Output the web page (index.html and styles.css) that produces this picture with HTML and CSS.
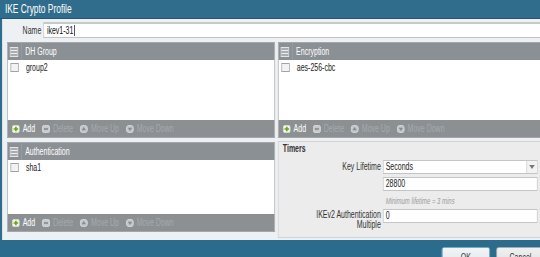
FILE: index.html
```html
<!DOCTYPE html>
<html>
<head>
<meta charset="utf-8">
<title>IKE Crypto Profile</title>
<link rel="stylesheet" href="styles.css">
</head>
<body>
<div class="dialog">
  <div class="titlebar">IKE Crypto Profile</div>
  <div class="content">
    <div class="name-row">
      <span class="name-label">Name</span>
      <div class="name-input">ikev1-31<span class="caret"></span></div>
    </div>
    <div class="grid">
      <div class="col">
        <section class="panel">
          <div class="phead"><span class="hcell"><span class="hcheck"></span></span><span class="htext">DH Group</span></div>
          <div class="pbody"><div class="row"><span class="cb"></span><span>group2</span></div></div>
          <div class="toolbar">
            <span class="tb-item add"><svg class="ico" viewBox="0 0 8 8" preserveAspectRatio="none"><rect x=".5" y=".5" width="7" height="7" rx="1.6" fill="#f3f7e6" stroke="#d7dcc9"/><path d="M4 1.7v4.6M1.7 4h4.6" stroke="#6ba51f" stroke-width="1.7"/></svg>Add</span>
            <span class="tb-item dis"><svg class="ico" viewBox="0 0 8 8" preserveAspectRatio="none"><rect x=".5" y=".5" width="7" height="7" rx="1.6" fill="#c7cacc" stroke="#d3d6d8"/><path d="M2 4h4" stroke="#7f8386" stroke-width="1.5"/></svg>Delete</span>
            <span class="tb-item dis"><svg class="ico" viewBox="0 0 8 8" preserveAspectRatio="none"><rect x=".5" y=".5" width="7" height="7" rx="2.5" fill="#c3c6c9" stroke="#d3d6d8"/><path d="M4 2L6.2 5.2H1.8z" fill="#888c8f"/></svg>Move Up</span>
            <span class="tb-item dis"><svg class="ico" viewBox="0 0 8 8" preserveAspectRatio="none"><rect x=".5" y=".5" width="7" height="7" rx="2.5" fill="#c3c6c9" stroke="#d3d6d8"/><path d="M4 6L6.2 2.8H1.8z" fill="#888c8f"/></svg>Move Down</span>
          </div>
        </section>
        <section class="panel auth">
          <div class="phead"><span class="hcell"><span class="hcheck"></span></span><span class="htext">Authentication</span></div>
          <div class="pbody"><div class="row"><span class="cb"></span><span>sha1</span></div></div>
          <div class="toolbar">
            <span class="tb-item add"><svg class="ico" viewBox="0 0 8 8" preserveAspectRatio="none"><rect x=".5" y=".5" width="7" height="7" rx="1.6" fill="#f3f7e6" stroke="#d7dcc9"/><path d="M4 1.7v4.6M1.7 4h4.6" stroke="#6ba51f" stroke-width="1.7"/></svg>Add</span>
            <span class="tb-item dis"><svg class="ico" viewBox="0 0 8 8" preserveAspectRatio="none"><rect x=".5" y=".5" width="7" height="7" rx="1.6" fill="#c7cacc" stroke="#d3d6d8"/><path d="M2 4h4" stroke="#7f8386" stroke-width="1.5"/></svg>Delete</span>
            <span class="tb-item dis"><svg class="ico" viewBox="0 0 8 8" preserveAspectRatio="none"><rect x=".5" y=".5" width="7" height="7" rx="2.5" fill="#c3c6c9" stroke="#d3d6d8"/><path d="M4 2L6.2 5.2H1.8z" fill="#888c8f"/></svg>Move Up</span>
            <span class="tb-item dis"><svg class="ico" viewBox="0 0 8 8" preserveAspectRatio="none"><rect x=".5" y=".5" width="7" height="7" rx="2.5" fill="#c3c6c9" stroke="#d3d6d8"/><path d="M4 6L6.2 2.8H1.8z" fill="#888c8f"/></svg>Move Down</span>
          </div>
        </section>
      </div>
      <div class="col">
        <section class="panel">
          <div class="phead"><span class="hcell"><span class="hcheck"></span></span><span class="htext">Encryption</span></div>
          <div class="pbody"><div class="row"><span class="cb"></span><span>aes-256-cbc</span></div></div>
          <div class="toolbar">
            <span class="tb-item add"><svg class="ico" viewBox="0 0 8 8" preserveAspectRatio="none"><rect x=".5" y=".5" width="7" height="7" rx="1.6" fill="#f3f7e6" stroke="#d7dcc9"/><path d="M4 1.7v4.6M1.7 4h4.6" stroke="#6ba51f" stroke-width="1.7"/></svg>Add</span>
            <span class="tb-item dis"><svg class="ico" viewBox="0 0 8 8" preserveAspectRatio="none"><rect x=".5" y=".5" width="7" height="7" rx="1.6" fill="#c7cacc" stroke="#d3d6d8"/><path d="M2 4h4" stroke="#7f8386" stroke-width="1.5"/></svg>Delete</span>
            <span class="tb-item dis"><svg class="ico" viewBox="0 0 8 8" preserveAspectRatio="none"><rect x=".5" y=".5" width="7" height="7" rx="2.5" fill="#c3c6c9" stroke="#d3d6d8"/><path d="M4 2L6.2 5.2H1.8z" fill="#888c8f"/></svg>Move Up</span>
            <span class="tb-item dis"><svg class="ico" viewBox="0 0 8 8" preserveAspectRatio="none"><rect x=".5" y=".5" width="7" height="7" rx="2.5" fill="#c3c6c9" stroke="#d3d6d8"/><path d="M4 6L6.2 2.8H1.8z" fill="#888c8f"/></svg>Move Down</span>
          </div>
        </section>
        <section class="timers">
          <div class="timers-title">Timers</div>
          <div class="tgrid">
            <span class="tlabel">Key Lifetime</span>
            <div class="select"><span class="select-val">Seconds</span><span class="select-btn"><span class="tri"></span></span></div>
            <span></span>
            <div class="tinput gap3">28800</div>
            <span></span>
            <div class="hint">Minimum lifetime = 3 mins</div>
            <span class="tlabel two">IKEv2 Authentication<br>Multiple</span>
            <div class="tinput gap2">0</div>
          </div>
        </section>
      </div>
    </div>
  </div>
  <div class="footer">
    <button class="btn ok">OK</button>
    <button class="btn cancel">Cancel</button>
  </div>
</div>
</body>
</html>
```
FILE: styles.css
```css
* { box-sizing: border-box; }
html, body { margin: 0; padding: 0; overflow: hidden; }
body {
  width: 540px;
  height: 257px;
  background: #2b6b8c;
  font-family: "Liberation Sans", Arial, sans-serif;
  font-size: 10px;
  color: #222;
}
/* the reference is horizontally compressed; the dialog is laid out wide and squeezed */
.dialog {
  width: 790px;
  transform: scaleX(0.7);
  transform-origin: 0 0;
}
.titlebar {
  height: 19px;
  background: #306c8c;
  border-bottom: 1px solid #1f5674;
  color: #fff;
  font-size: 12px;
  line-height: 18px;
  padding-left: 7px;
}
.content {
  height: 221px;
  background: #eef1f3;
  border-left: 3px solid #306c8c;
  padding: 3px 0 0 7px;
}
.name-row {
  display: flex;
  align-items: center;
  height: 16px;
  margin-bottom: 4px;
}
.name-label {
  width: 49px;
  text-align: right;
  color: #333;
}
.name-input {
  flex: 1;
  height: 16px;
  margin-left: 3px;
  background: #fff;
  border: 1px solid #c2c2c2;
  border-top: 2px solid #c9c9c9;
  padding-left: 4px;
  line-height: 12px;
  color: #111;
  display: flex;
  align-items: center;
}
.caret {
  display: inline-block;
  width: 1.4px;
  height: 11px;
  background: #111;
  margin-left: 1px;
}
.grid {
  display: grid;
  grid-template-columns: 383px 376px;
  column-gap: 4px;
}
.panel {
  border: 1px solid #a3a7ab;
  background: #fff;
}
.panel.auth { margin-top: 4px; }
.panel.auth .pbody { height: 54px; }
.phead {
  height: 17px;
  background: #8b9094;
  display: flex;
  align-items: center;
  color: #fff;
}
.hcell {
  width: 20px;
  height: 100%;
  display: flex;
  align-items: center;
  padding-left: 3px;
  border-right: 1px solid #9ca1a5;
}
.hcheck {
  width: 12px;
  height: 10px;
  border: 1px solid #e4e6e8;
  background: repeating-linear-gradient(#a9adb0 0 2px, #eceeef 2px 3px);
}
.htext { margin-left: 5px; }
.pbody { height: 60px; }
.row {
  display: flex;
  align-items: center;
  height: 15px;
}
.cb {
  width: 12px;
  height: 9px;
  margin: 0 10px 0 4px;
  border: 1px solid #a2a2a2;
  background: #f2f2f2;
}
.toolbar {
  height: 17px;
  background: #8c9093;
  display: flex;
  align-items: center;
  padding-left: 6px;
  gap: 10px;
}
.tb-item {
  display: flex;
  align-items: center;
  gap: 4px;
}
.tb-item.add { color: #fff; }
.tb-item.dis { color: #a6aaad; }
.ico {
  width: 11.4px;
  height: 8px;
  display: block;
}
.timers {
  margin-top: 3px;
  height: 97px;
  background: #ececec;
  border: 1px solid #d2d2d2;
  padding: 1px 4px 0 0;
}
.timers-title {
  font-weight: bold;
  line-height: 12px;
  padding-left: 6px;
  color: #333;
  margin-bottom: 5px;
}
.tgrid {
  display: grid;
  grid-template-columns: 146px 1fr;
  column-gap: 3px;
  align-items: start;
}
.tlabel {
  text-align: right;
  line-height: 14px;
  color: #333;
}
.tlabel.two {
  line-height: 10px;
  margin-top: 3px;
}
.select {
  height: 14px;
  background: #fff;
  border: 1px solid #c4c4c4;
  display: flex;
}
.select-val {
  flex: 1;
  padding-left: 3px;
  line-height: 12px;
}
.select-btn {
  width: 15px;
  border-left: 1px solid #d0d0d0;
  background: #f2f2f2;
  display: flex;
  align-items: center;
  justify-content: center;
}
.tri {
  width: 0;
  height: 0;
  border-left: 4px solid transparent;
  border-right: 4px solid transparent;
  border-top: 4px solid #777;
}
.tinput {
  height: 14px;
  background: #fff;
  border: 1px solid #c4c4c4;
  padding-left: 3px;
  line-height: 12px;
}
.tinput.gap3 { margin-top: 3px; }
.tinput.gap2 { margin-top: 2px; }
.hint {
  margin-top: 4px;
  line-height: 12px;
  font-size: 8.5px;
  font-style: italic;
  color: #9a9a9a;
  padding-left: 4px;
}
.footer {
  height: 30px;
  background: #2b6b8c;
  display: flex;
  justify-content: flex-end;
  align-items: flex-start;
  gap: 9px;
  padding: 7px 12px 0 0;
}
.btn {
  width: 69px;
  height: 20px;
  margin: 0;
  padding: 0;
  font-family: inherit;
  font-size: 10px;
  color: #333;
  border-radius: 3px;
}
.btn.ok {
  background: linear-gradient(#f2f5f7, #dfe5e8);
  border: 1px solid #86b7cc;
}
.btn.cancel {
  background: linear-gradient(#f0f0f0, #e0e0e0);
  border: 1px solid #b5b8ba;
}
```
